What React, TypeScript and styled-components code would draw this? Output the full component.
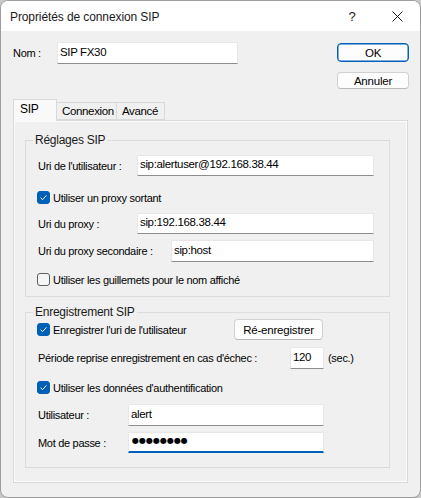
import React from "react";
import styled, { createGlobalStyle } from "styled-components";

const GlobalStyle = createGlobalStyle`
  html, body {
    margin: 0;
    padding: 0;
    background: #c8c8c8;
  }
  * {
    box-sizing: border-box;
  }
`;

const uiFont = `"Liberation Sans", Arial, sans-serif`;

const Window = styled.div`
  width: 421px;
  height: 498px;
  border: 1px solid #9d9d9d;
  border-radius: 8px;
  overflow: hidden;
  background: #f0f0f0;
  display: flex;
  flex-direction: column;
  font-family: ${uiFont};
  font-size: 11px;
  letter-spacing: -0.3px;
  color: #000;
`;

const TitleBar = styled.div`
  height: 30px;
  flex: none;
  background: #fff;
  display: flex;
  align-items: center;
  padding-left: 9px;
`;

const Title = styled.div`
  flex: 1;
  font-size: 12px;
  letter-spacing: -0.1px;
  color: #1a1a1a;
  padding-top: 2px;
`;

const TitleButton = styled.div<{ $width: number }>`
  width: ${(p) => p.$width}px;
  height: 30px;
  display: flex;
  align-items: center;
  justify-content: center;
  font-size: 13px;
  color: #1a1a1a;
`;

const Body = styled.div`
  flex: 1;
  padding: 11px 11px 0 12px;
  display: flex;
  flex-direction: column;
`;

const Header = styled.div`
  display: flex;
  justify-content: space-between;
  align-items: flex-start;
`;

const NameRow = styled.div`
  display: flex;
  align-items: center;
`;

const Label = styled.span<{ $width?: number }>`
  flex: none;
  width: ${(p) => (p.$width ? `${p.$width}px` : "auto")};
  white-space: nowrap;
`;

const ButtonColumn = styled.div`
  width: 72px;
  display: flex;
  flex-direction: column;
  gap: 10px;
  padding-top: 1px;
`;

const Button = styled.button<{ $default?: boolean; $height: number; $width?: number }>`
  width: ${(p) => (p.$width ? `${p.$width}px` : "100%")};
  height: ${(p) => p.$height}px;
  padding: 0;
  font-family: ${uiFont};
  font-size: 11.5px;
  letter-spacing: -0.2px;
  color: #000;
  background: #fdfdfd;
  border: 1px solid ${(p) => (p.$default ? "#005fb8" : "#d1d1d1")};
  border-bottom-color: ${(p) => (p.$default ? "#005fb8" : "#b9b9b9")};
  border-radius: 4px;
  box-shadow: ${(p) => (p.$default ? "inset 0 0 0 0.5px #005fb8" : "none")};
`;

const Field = styled.input<{ $width?: number; $focused?: boolean; $height?: number }>`
  flex: ${(p) => (p.$width ? "none" : "1")};
  width: ${(p) => (p.$width ? `${p.$width}px` : "auto")};
  min-width: 0;
  height: ${(p) => p.$height ?? 21}px;
  padding: 0 2px 3px;
  background: #fff;
  border: 1px solid #e7e7e7;
  border-bottom: ${(p) => (p.$focused ? "2px solid #005fb8" : "1px solid #8d8d8d")};
  border-radius: 2px 2px 0 0;
  font-family: ${uiFont};
  font-size: 11.5px;
  letter-spacing: -0.35px;
  color: #000;
  outline: none;
`;

const PasswordField = styled(Field)`
  font-family: "DejaVu Sans", sans-serif;
  font-size: 8px;
  letter-spacing: 0;
  padding-left: 3px;
`;

const TabStrip = styled.div`
  margin-top: 10px;
  height: 22px;
  display: flex;
  align-items: flex-end;
  position: relative;
  z-index: 1;
  margin-bottom: -1px;
`;

const Tab = styled.div<{ $active?: boolean; $width: number }>`
  width: ${(p) => p.$width}px;
  height: ${(p) => (p.$active ? 22 : 18)}px;
  margin-bottom: ${(p) => (p.$active ? 0 : 1)}px;
  padding-left: ${(p) => (p.$active ? 6 : 5)}px;
  padding-top: 2px;
  background: ${(p) => (p.$active ? "#f9f9f9" : "#f0f0f0")};
  border: 1px solid #d9d9d9;
  border-bottom: ${(p) => (p.$active ? "none" : "1px solid #d9d9d9")};
  border-left-width: ${(p) => (p.$active ? 1 : 0)}px;
  font-size: ${(p) => (p.$active ? 12 : 11.5)}px;
  letter-spacing: -0.35px;
  white-space: nowrap;
`;

const Panel = styled.div`
  width: 395px;
  height: 363px;
  border: 1px solid #d9d9d9;
  box-shadow: inset 0 0 0 1px #fcfcfc;
  background: #f0f0f0;
  padding: 12px 17px 15px 11px;
  display: flex;
  flex-direction: column;
  gap: 8px;
`;

const Group = styled.fieldset<{ $bottom: number }>`
  margin: 0;
  padding: 0 15px ${(p) => p.$bottom}px 12px;
  border: 1px solid #dcdcdc;
  display: flex;
  flex-direction: column;
`;

const GroupTitle = styled.legend`
  margin-left: -5px;
  padding: 0 2px;
  font-size: 12px;
  letter-spacing: -0.25px;
  line-height: 15px;
  color: #1a1a1a;
`;

const Row = styled.div<{ $top: number; $height?: number }>`
  display: flex;
  align-items: center;
  margin-top: ${(p) => p.$top}px;
  height: ${(p) => (p.$height ? `${p.$height}px` : "auto")};
`;

const CheckRow = styled.label<{ $width?: number }>`
  display: flex;
  align-items: center;
  gap: 3px;
  margin-left: -1px;
  width: ${(p) => (p.$width ? `${p.$width}px` : "auto")};
  flex: none;
  white-space: nowrap;
`;

const Box = styled.span<{ $checked?: boolean }>`
  width: 13px;
  height: 13px;
  flex: none;
  border-radius: 3px;
  display: flex;
  align-items: center;
  justify-content: center;
  background: ${(p) => (p.$checked ? "#005fb8" : "#f6f6f6")};
  border: 1px solid ${(p) => (p.$checked ? "#005fb8" : "#5f5f5f")};
`;

const Unit = styled.span`
  margin-left: 4px;
`;

const Check = ({ checked, children, width }: { checked?: boolean; children: React.ReactNode; width?: number }) => (
  <CheckRow $width={width}>
    <Box $checked={checked}>
      {checked && (
        <svg width="9" height="9" viewBox="0 0 9 9">
          <path d="M1.6 4.8 L3.6 6.6 L7.4 2.4" fill="none" stroke="#fff" strokeWidth="1" />
        </svg>
      )}
    </Box>
    {children}
  </CheckRow>
);

const CloseIcon = () => (
  <svg width="11" height="11" viewBox="0 0 11 11">
    <path d="M0.5 0.5 L10.5 10.5 M10.5 0.5 L0.5 10.5" stroke="#1a1a1a" strokeWidth="1" />
  </svg>
);

const App = () => (
  <>
    <GlobalStyle />
    <Window>
      <TitleBar>
        <Title>Propriétés de connexion SIP</Title>
        <TitleButton $width={44}>?</TitleButton>
        <TitleButton $width={46}>
          <CloseIcon />
        </TitleButton>
      </TitleBar>
      <Body>
        <Header>
          <NameRow>
            <Label $width={44}>Nom :</Label>
            <Field $width={181} $height={22} defaultValue="SIP FX30" readOnly />
          </NameRow>
          <ButtonColumn>
            <Button $default $height={19}>OK</Button>
            <Button $height={17}>Annuler</Button>
          </ButtonColumn>
        </Header>

        <TabStrip>
          <Tab $active $width={44}>SIP</Tab>
          <Tab $width={60}>Connexion</Tab>
          <Tab $width={48}>Avancé</Tab>
        </TabStrip>

        <Panel>
          <Group $bottom={8}>
            <GroupTitle>Réglages SIP</GroupTitle>
            <Row $top={7}>
              <Label $width={99}>Uri de l'utilisateur :</Label>
              <Field defaultValue="sip:alertuser@192.168.38.44" readOnly />
            </Row>
            <Row $top={13} $height={17}>
              <Check checked>Utiliser un proxy sortant</Check>
            </Row>
            <Row $top={7}>
              <Label $width={99}>Uri du proxy :</Label>
              <Field defaultValue="sip:192.168.38.44" readOnly />
            </Row>
            <Row $top={6}>
              <Label $width={133}>Uri du proxy secondaire :</Label>
              <Field $height={22} defaultValue="sip:host" readOnly />
            </Row>
            <Row $top={9} $height={17}>
              <Check>Utiliser les guillemets pour le nom affiché</Check>
            </Row>
          </Group>

          <Group $bottom={14}>
            <GroupTitle>Enregistrement SIP</GroupTitle>
            <Row $top={-1} $height={21}>
              <Check checked width={197}>Enregistrer l'uri de l'utilisateur</Check>
              <Button $height={21} $width={89}>Ré-enregistrer</Button>
            </Row>
            <Row $top={7}>
              <Label $width={252}>Période reprise enregistrement en cas d'échec :</Label>
              <Field $width={34} $height={22} defaultValue="120" readOnly />
              <Unit>(sec.)</Unit>
            </Row>
            <Row $top={10} $height={17}>
              <Check checked>Utiliser les données d'authentification</Check>
            </Row>
            <Row $top={8}>
              <Label $width={90}>Utilisateur :</Label>
              <Field $width={196} $height={22} defaultValue="alert" readOnly />
            </Row>
            <Row $top={6}>
              <Label $width={90}>Mot de passe :</Label>
              <PasswordField $width={196} $focused defaultValue="●●●●●●●●" readOnly />
            </Row>
          </Group>
        </Panel>
      </Body>
    </Window>
  </>
);

export default App;
